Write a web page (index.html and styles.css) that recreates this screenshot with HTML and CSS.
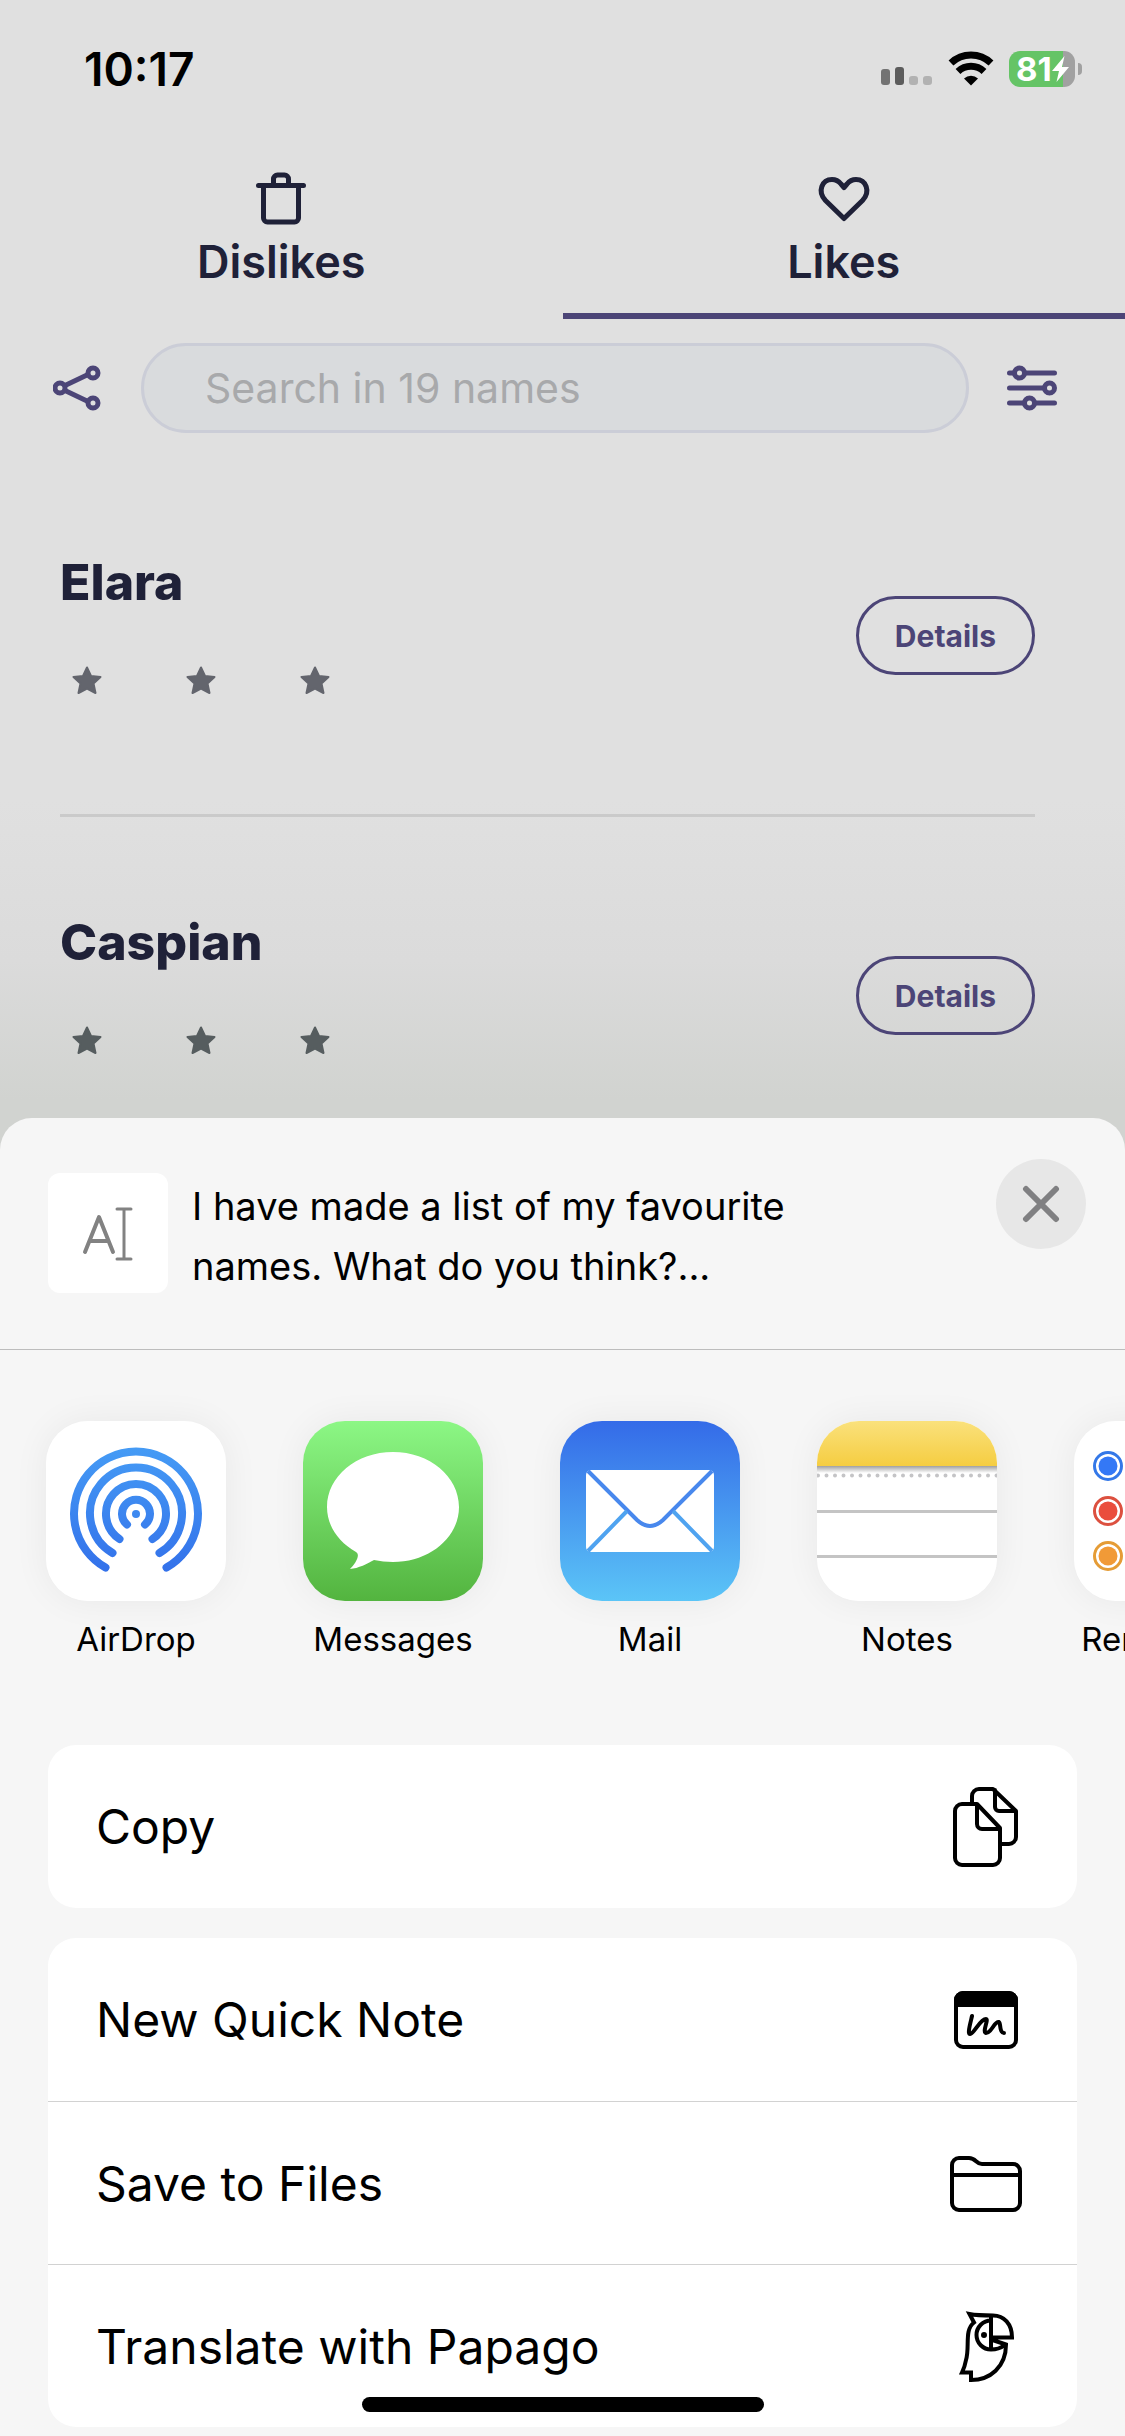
FILE: index.html
```html
<!DOCTYPE html>
<html lang="en">
<head>
    <meta charset="UTF-8">
    <meta name="viewport" content="width=device-width, initial-scale=1.0">
    <title>Baby Names - Likes</title>
    <link rel="stylesheet" href="styles.css">
</head>
<body>
    <div class="screen">
        <header class="status-bar">
            <span class="time">10:17</span>
            <div class="status-icons">
                <svg width="52" height="20" viewBox="0 0 52 20">
                    <rect x="0" y="2" width="9" height="16" rx="3" fill="#737373"/>
                    <rect x="14" y="0" width="9" height="18" rx="3" fill="#5c5c5c"/>
                    <rect x="28" y="9" width="9" height="9" rx="3" fill="#b2b2b2"/>
                    <rect x="42" y="9" width="9" height="9" rx="3" fill="#b2b2b2"/>
                </svg>
                <svg width="46" height="36" viewBox="0 0 46 36">
                    <path d="M3 12a29 29 0 0 1 40 0" fill="none" stroke="#000" stroke-width="7"/>
                    <path d="M10 20.500a19 19 0 0 1 26 0" fill="none" stroke="#000" stroke-width="7"/>
                    <path d="M16 27.500a10.500 10.500 0 0 1 14 0l-7 7z" fill="#000"/>
                </svg>
                <div class="battery">
                    <span class="battery-level">81</span>
                    <svg width="17" height="26" viewBox="0 0 17 26"><path d="M12.500 0L0 15h7L4.500 26L17 11H10z" fill="#fff"/></svg>
                </div>
            </div>
        </header>

        <nav class="tabs">
            <a class="tab" href="#dislikes">
                <svg width="60" height="60" viewBox="0 0 60 60" fill="none" stroke="#1f2138" stroke-width="5" stroke-linecap="round" stroke-linejoin="round">
                    <path d="M7.500 19.500h45M12.500 20v32a4 4 0 0 0 4 4h27a4 4 0 0 0 4-4V20M22.500 19v-6a4 4 0 0 1 4-4h7a4 4 0 0 1 4 4v6"/>
                </svg>
                <span>Dislikes</span>
            </a>
            <a class="tab active" href="#likes">
                <svg width="60" height="60" viewBox="0 0 60 60" fill="none" stroke="#1f2138" stroke-width="5" stroke-linejoin="round">
                    <path d="M30 52.500L11.500 34.500C3 25.500 8 13.500 18 13.500c4.500 0 7 2 9 4.500l3 3.500l3-3.500c2-2.500 4.500-4.500 9-4.500c10 0 15 12 6.500 21z"/>
                </svg>
                <span>Likes</span>
            </a>
        </nav>

        <div class="search-bar">
            <button class="icon-button" type="button" aria-label="Share">
                <svg width="50" height="50" viewBox="0 0 50 50" fill="none" stroke="#4c4577" stroke-width="5">
                    <path d="M12 22.500L34 12M12 27.500L34 38"/>
                    <circle cx="7" cy="25" r="5"/>
                    <circle cx="40" cy="10" r="5"/>
                    <circle cx="40" cy="40" r="5"/>
                </svg>
            </button>
            <input class="search" type="search" placeholder="Search in 19 names" aria-label="Search names">
            <button class="icon-button" type="button" aria-label="Filter">
                <svg width="50" height="50" viewBox="0 0 50 50" fill="none" stroke="#4c4577" stroke-width="5" stroke-linecap="round">
                    <path d="M2.500 10h5M18 10h29.500M2.500 25h35M2.500 40h15M28 40h19.500"/>
                    <circle cx="12.500" cy="10" r="5"/>
                    <circle cx="42.500" cy="25" r="5"/>
                    <circle cx="22.500" cy="40" r="5"/>
                </svg>
            </button>
        </div>

        <main class="names">
            <section class="name-row">
                <div>
                    <h2>Elara</h2>
                    <div class="stars">
                        <svg viewBox="0 0 30 28"><path d="M15 1.500l4 8.500l9.500 1l-7 6.500l2 9.500l-8.500-4.500l-8.500 4.500l2-9.500l-7-6.500l9.500-1z"/></svg>
                        <svg viewBox="0 0 30 28"><path d="M15 1.500l4 8.500l9.500 1l-7 6.500l2 9.500l-8.500-4.500l-8.500 4.500l2-9.500l-7-6.500l9.500-1z"/></svg>
                        <svg viewBox="0 0 30 28"><path d="M15 1.500l4 8.500l9.500 1l-7 6.500l2 9.500l-8.500-4.500l-8.500 4.500l2-9.500l-7-6.500l9.500-1z"/></svg>
                    </div>
                </div>
                <button class="details" type="button">Details</button>
            </section>
            <section class="name-row">
                <div>
                    <h2>Caspian</h2>
                    <div class="stars shaded">
                        <svg viewBox="0 0 30 28"><path d="M15 1.500l4 8.500l9.500 1l-7 6.500l2 9.500l-8.500-4.500l-8.500 4.500l2-9.500l-7-6.500l9.500-1z"/></svg>
                        <svg viewBox="0 0 30 28"><path d="M15 1.500l4 8.500l9.500 1l-7 6.500l2 9.500l-8.500-4.500l-8.500 4.500l2-9.500l-7-6.500l9.500-1z"/></svg>
                        <svg viewBox="0 0 30 28"><path d="M15 1.500l4 8.500l9.500 1l-7 6.500l2 9.500l-8.500-4.500l-8.500 4.500l2-9.500l-7-6.500l9.500-1z"/></svg>
                    </div>
                </div>
                <button class="details" type="button">Details</button>
            </section>
        </main>

        <div class="sheet">
            <div class="sheet-header">
                <div class="thumb">
                    <svg width="52" height="58" viewBox="0 0 52 58" fill="none" stroke="#828282" stroke-linecap="round" stroke-linejoin="round">
                        <path d="M3 48L17 13L31 48M8 37h18" stroke-width="4"/>
                        <path d="M42 5v50M35 5h14M35 55h14" stroke-width="3"/>
                    </svg>
                </div>
                <p class="message">I have made a list of my favourite names. What do you think?...</p>
                <button class="close" type="button" aria-label="Close">
                    <svg width="38" height="38" viewBox="0 0 38 38" fill="none" stroke="#808082" stroke-width="6" stroke-linecap="round"><path d="M4 4l30 30M34 4L4 34"/></svg>
                </button>
            </div>

            <div class="apps">
                <button class="app" type="button">
                    <svg class="app-icon" viewBox="0 0 180 180">
                        <defs><linearGradient id="airdrop" gradientUnits="userSpaceOnUse" x1="0" y1="27" x2="0" y2="151"><stop offset="0" stop-color="#459bf5"/><stop offset="1" stop-color="#3371ea"/></linearGradient></defs>
                        <rect width="180" height="180" fill="#fff"/>
                        <g fill="none" stroke="url(#airdrop)" stroke-width="8" stroke-linecap="round">
                            <path d="M59.500 146.500A62 62 0 1 1 120.500 146.500"/>
                            <path d="M66.500 132A46 46 0 1 1 113.500 132"/>
                            <path d="M73.500 118A30 30 0 1 1 106.500 118"/>
                            <path d="M81 103.500A14 14 0 1 1 99 103.500"/>
                        </g>
                        <circle cx="90" cy="93" r="4" fill="#3d89f0"/>
                    </svg>
                    <span>AirDrop</span>
                </button>
                <button class="app" type="button">
                    <svg class="app-icon" viewBox="0 0 180 180">
                        <defs><linearGradient id="messages" x1="0" y1="0" x2="0" y2="1"><stop offset="0" stop-color="#8cf785"/><stop offset="1" stop-color="#53b43f"/></linearGradient></defs>
                        <rect width="180" height="180" fill="url(#messages)"/>
                        <path d="M90 31c-36.500 0-66 24.500-66 55c0 19 11.500 35 29 45c5 3-1 12-6 17c8-.5 18-5.500 24-9q9 2 19 2c36.500 0 66-24.500 66-55s-29.500-55-66-55z" fill="#fff"/>
                    </svg>
                    <span>Messages</span>
                </button>
                <button class="app" type="button">
                    <svg class="app-icon" viewBox="0 0 180 180">
                        <defs><linearGradient id="mail" x1="0" y1="0" x2="0" y2="1"><stop offset="0" stop-color="#346be8"/><stop offset="1" stop-color="#5bc5f7"/></linearGradient></defs>
                        <rect width="180" height="180" fill="url(#mail)"/>
                        <rect x="26" y="49" width="128" height="82" rx="5" fill="#fff"/>
                        <path d="M28 50L77 99q13 12 26 0L152 50" fill="none" stroke="#4888ed" stroke-width="4"/>
                        <path d="M28 130L67 90M152 130L113 90" fill="none" stroke="#4fa3f0" stroke-width="4"/>
                    </svg>
                    <span>Mail</span>
                </button>
                <button class="app" type="button">
                    <svg class="app-icon" viewBox="0 0 180 180">
                        <defs>
                            <linearGradient id="notes" x1="0" y1="0" x2="0" y2="1"><stop offset="0" stop-color="#fae17c"/><stop offset="1" stop-color="#f5cd41"/></linearGradient>
                            <linearGradient id="fold" x1="0" y1="0" x2="0" y2="1"><stop offset="0" stop-color="#a0a0a0"/><stop offset="1" stop-color="#fff"/></linearGradient>
                        </defs>
                        <rect width="180" height="180" fill="#fff"/>
                        <rect width="180" height="45" fill="url(#notes)"/>
                        <rect y="45" width="180" height="7" fill="url(#fold)"/>
                        <path d="M1 54.500h180" stroke="#c4c4c6" stroke-width="4" stroke-linecap="round" stroke-dasharray="0 8.500"/>
                        <path d="M0 90.500h180M0 135.500h180" stroke="#c4c4c4" stroke-width="3"/>
                    </svg>
                    <span>Notes</span>
                </button>
                <button class="app" type="button">
                    <svg class="app-icon" viewBox="0 0 180 180">
                        <rect width="180" height="180" fill="#fff"/>
                        <g fill="none" stroke-width="3">
                            <circle cx="34" cy="45" r="13.500" stroke="#3478e8"/>
                            <circle cx="34" cy="90" r="13.500" stroke="#dc503f"/>
                            <circle cx="34" cy="135" r="13.500" stroke="#e59c36"/>
                        </g>
                        <circle cx="34" cy="45" r="9.500" fill="#3478f6"/>
                        <circle cx="34" cy="90" r="9.500" fill="#ea4d3d"/>
                        <circle cx="34" cy="135" r="9.500" fill="#f19a37"/>
                        <path d="M60 67h120M60 112h120" stroke="#d0d0d0" stroke-width="2"/>
                    </svg>
                    <span>Reminders</span>
                </button>
            </div>

            <div class="actions">
                <button class="action" type="button">
                    <span>Copy</span>
                    <svg class="action-icon" viewBox="0 0 90 90">
                        <path d="M31 20v-6a7 7 0 0 1 7-7h14l23 22v26a7 7 0 0 1-7 7H60M54 8v17a4 4 0 0 0 4 4h17"/>
                        <path d="M21 22h15l23 24v30a7 7 0 0 1-7 7H21a7 7 0 0 1-7-7V29a7 7 0 0 1 7-7zM36 23v19a5 5 0 0 0 5 5h18"/>
                    </svg>
                </button>
            </div>

            <div class="actions">
                <button class="action" type="button">
                    <span>New Quick Note</span>
                    <svg class="action-icon" viewBox="0 0 90 90">
                        <rect x="15" y="18" width="60" height="54" rx="7"/>
                        <path d="M15 30v-5a7 7 0 0 1 7-7h46a7 7 0 0 1 7 7v5z" fill="#000"/>
                        <path d="M31 41c-1 5-5 18-2 18c4 0 10-15 16-15c3 0-4 13 0 14c6 0 8-12 13-11c2 1 0 11 5 11"/>
                    </svg>
                </button>
                <button class="action" type="button">
                    <span>Save to Files</span>
                    <svg class="action-icon" viewBox="0 0 90 90">
                        <path d="M11 65V27a7 7 0 0 1 7-7h10c7 0 7 6 13 6h31a7 7 0 0 1 7 7v32a7 7 0 0 1-7 7H18a7 7 0 0 1-7-7zM11 37h68"/>
                    </svg>
                </button>
                <button class="action" type="button">
                    <span>Translate with Papago</span>
                    <svg class="action-icon papago" viewBox="0 0 90 90">
                        <path d="M50 36.500H71C71 23 63 14.500 52 14.500C44 14.500 36 14.500 28.500 13L33 21.500C23 29 29 46 25 59Q24 65 21 71.500H30V79C49 79 65 66 65 43.500L50 38.500"/>
                        <path d="M50 19.500a14.500 14.500 0 0 0 0 29q8 0 13-4M50 15v34"/>
                        <circle cx="43" cy="34" r="2" fill="#000" stroke-width="2"/>
                    </svg>
                </button>
            </div>
        </div>
        <div class="home-indicator"></div>
    </div>
</body>
</html>
```

FILE: styles.css
```css
* {
    box-sizing: border-box;
}

body {
    margin: 0;
    font-family: Inter, "Liberation Sans", sans-serif;
    background-color: #f6f6f6;
    color: #000;
}

button {
    font-family: inherit;
    color: inherit;
    background: none;
    border: none;
    padding: 0;
    cursor: pointer;
}

svg {
    display: block;
    flex-shrink: 0;
}

.screen {
    position: relative;
    height: 100vh;
    overflow: hidden;
    display: flex;
    flex-direction: column;
    background: linear-gradient(#e0e0e0 800px, #dbdbdb 960px, #d1d3d0 1100px);
}

/* status bar */
.status-bar {
    display: flex;
    justify-content: space-between;
    align-items: center;
    height: 138px;
    padding: 0 44px 0 84px;
}

.time {
    font-size: 46px;
    font-weight: 600;
}

.status-icons {
    display: flex;
    align-items: flex-end;
    gap: 15px;
}

.battery {
    position: relative;
    display: flex;
    align-items: center;
    width: 66px;
    height: 36px;
    padding-left: 7px;
    margin-right: 6px;
    border-radius: 11px;
    background: linear-gradient(90deg, #65c466 54px, #a1a1a1 54px);
}

.battery::after {
    content: "";
    position: absolute;
    right: -7px;
    top: 12px;
    width: 4px;
    height: 12px;
    border-radius: 0 4px 4px 0;
    background: #a1a1a1;
}

.battery-level {
    color: #fff;
    font-size: 33px;
    font-weight: 700;
    line-height: 36px;
}

/* tabs */
.tabs {
    display: flex;
}

.tab {
    flex: 1;
    display: flex;
    flex-direction: column;
    align-items: center;
    height: 181px;
    padding-top: 28px;
    border-bottom: 6px solid transparent;
    color: #1f2138;
    font-size: 45px;
    font-weight: 600;
    line-height: 72px;
    text-decoration: none;
}

.tab.active {
    border-color: #4c4577;
}

.search-bar {
    display: flex;
    align-items: center;
    gap: 38px;
    padding: 24px 68px 0 53px;
}

.search {
    flex: 1;
    min-width: 0;
    height: 90px;
    padding: 0 61px;
    border: 3px solid #cbcdd7;
    border-radius: 45px;
    background: #d9dbdd;
    font-family: inherit;
    font-size: 41px;
}

.search::placeholder {
    color: #a8a9ab;
    opacity: 1;
}

/* names */
.names {
    padding: 24px 90px 0 60px;
}

.name-row {
    display: flex;
    justify-content: space-between;
    height: 360px;
    padding-top: 94px;
    border-bottom: 3px solid #cacaca;
}

h2 {
    margin: 0;
    font-size: 50px;
    font-weight: 800;
    line-height: 62px;
    color: #1f2138;
}

.stars {
    display: flex;
    gap: 84px;
    padding: 53px 12px 0;
}

.stars svg {
    width: 30px;
    height: 28px;
    fill: #63656d;
    stroke: #63656d;
    stroke-width: 2;
    stroke-linejoin: round;
}

.stars.shaded svg {
    fill: #565d5f;
    stroke: #565d5f;
}

.details {
    height: 79px;
    margin-top: 45px;
    padding: 0 36px;
    border: 3px solid #4c4577;
    border-radius: 40px;
    color: #4c4577;
    font-size: 30px;
    font-weight: 700;
}

/* share sheet */
.sheet {
    position: absolute;
    top: 1118px;
    left: 0;
    right: 0;
    bottom: 0;
    border-radius: 32px 32px 0 0;
    background: #f6f6f6;
    overflow: hidden;
}

.sheet-header {
    display: flex;
    gap: 24px;
    height: 232px;
    padding: 41px 39px 0 48px;
    border-bottom: 1px solid #bdbdbd;
}

.thumb {
    display: flex;
    align-items: center;
    justify-content: center;
    width: 120px;
    height: 120px;
    margin-top: 14px;
    border-radius: 12px;
    background: #fff;
}

.message {
    flex: 1;
    max-width: 640px;
    margin: 17px 0 0;
    font-size: 38px;
    line-height: 60px;
}

.close {
    display: flex;
    align-items: center;
    justify-content: center;
    width: 90px;
    height: 90px;
    margin-left: auto;
    border-radius: 50%;
    background: #e7e7e7;
}

.apps {
    display: flex;
    gap: 77px;
    padding: 71px 0 86px 46px;
    overflow: hidden;
}

.app {
    flex: none;
    display: flex;
    flex-direction: column;
    align-items: center;
    gap: 18px;
    width: 180px;
    font-size: 33px;
    line-height: 40px;
}

.app-icon {
    width: 180px;
    height: 180px;
    border-radius: 42px;
    box-shadow: 0 0 36px rgba(0, 0, 0, 0.06);
}

.actions {
    margin: 0 48px 30px;
    border-radius: 28px;
    background: #fff;
    overflow: hidden;
}

.action {
    display: flex;
    align-items: center;
    justify-content: space-between;
    width: 100%;
    height: 163px;
    padding: 0 46px 0 48px;
    font-size: 48px;
}

.action + .action {
    border-top: 1px solid #d2d2d2;
}

.action-icon {
    width: 90px;
    height: 90px;
    fill: none;
    stroke: #000;
    stroke-width: 4;
    stroke-linecap: round;
    stroke-linejoin: round;
}

.papago {
    stroke-linecap: butt;
    stroke-linejoin: miter;
}

.home-indicator {
    position: absolute;
    left: 50%;
    bottom: 24px;
    width: 402px;
    height: 15px;
    margin-left: -201px;
    border-radius: 8px;
    background: #000;
}
```
